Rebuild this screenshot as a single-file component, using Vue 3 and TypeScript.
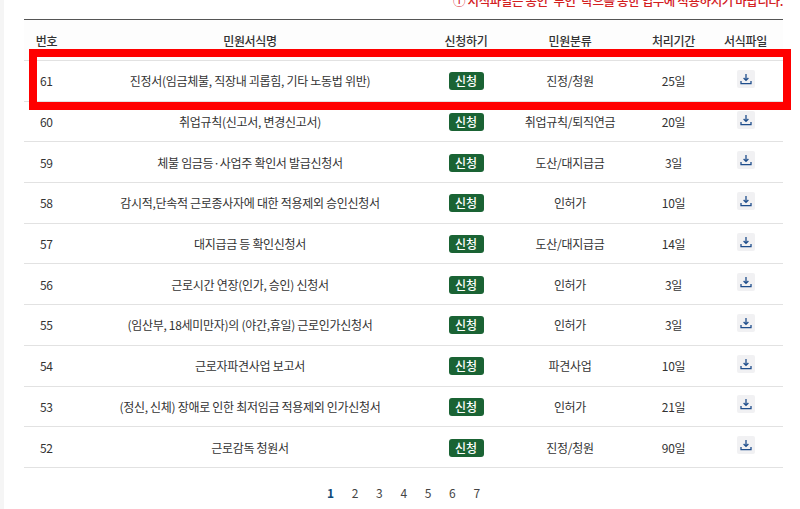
<script setup lang="ts">
interface Row { no: number; name: string; kind: string; days: string }
const rows: Row[] = [
  { no: 61, name: '진정서(임금체불, 직장내 괴롭힘, 기타 노동법 위반)', kind: '진정/청원', days: '25일' },
  { no: 60, name: '취업규칙(신고서, 변경신고서)', kind: '취업규칙/퇴직연금', days: '20일' },
  { no: 59, name: '체불 임금등·사업주 확인서 발급신청서', kind: '도산/대지급금', days: '3일' },
  { no: 58, name: '감시적,단속적 근로종사자에 대한 적용제외 승인신청서', kind: '인허가', days: '10일' },
  { no: 57, name: '대지급금 등 확인신청서', kind: '도산/대지급금', days: '14일' },
  { no: 56, name: '근로시간 연장(인가, 승인) 신청서', kind: '인허가', days: '3일' },
  { no: 55, name: '(임산부, 18세미만자)의 (야간,휴일) 근로인가신청서', kind: '인허가', days: '3일' },
  { no: 54, name: '근로자파견사업 보고서', kind: '파견사업', days: '10일' },
  { no: 53, name: '(정신, 신체) 장애로 인한 최저임금 적용제외 인가신청서', kind: '인허가', days: '21일' },
  { no: 52, name: '근로감독 청원서', kind: '진정/청원', days: '90일' },
]
const pages = [1, 2, 3, 4, 5, 6, 7]
</script>

<template>
  <div class="page">
    <p class="notice">ⓘ 서식파일은 공인 '부인' 탁으를 통한 업무에 적용하시기 바랍니다.</p>
    <table class="table">
      <colgroup>
        <col class="c1" /><col class="c2" /><col class="c3" /><col class="c4" /><col class="c5" /><col class="c6" />
      </colgroup>
      <thead>
        <tr>
          <th>번호</th><th>민원서식명</th><th>신청하기</th><th>민원분류</th><th>처리기간</th><th>서식파일</th>
        </tr>
      </thead>
      <tbody>
        <tr v-for="r in rows" :key="r.no">
          <td class="no">{{ r.no }}</td>
          <td>{{ r.name }}</td>
          <td><span class="apply">신청</span></td>
          <td>{{ r.kind }}</td>
          <td>{{ r.days }}</td>
          <td>
            <span class="file">
              <svg width="12" height="12" viewBox="0 0 12 12" fill="none" stroke="#1f4e8c" stroke-width="1.3">
                <path d="M6 1v6.2M3.6 5 6 7.4 8.4 5" />
                <path d="M1 8v2.6h10V8" />
              </svg>
            </span>
          </td>
        </tr>
      </tbody>
    </table>
    <nav class="pager">
      <span v-for="p in pages" :key="p" :class="{ on: p === 1 }">{{ p }}</span>
    </nav>
    <div class="mark"></div>
  </div>
</template>

<style>
html, body { margin: 0; background: #fff; }
</style>

<style scoped>
.page {
  position: relative;
  width: 800px;
  height: 509px;
  overflow: hidden;
  box-sizing: border-box;
  padding: 0 17px 0 24px;
  background: #fff;
  font-family: "Noto Sans CJK KR", "Noto Sans", sans-serif;
  color: #333;
  letter-spacing: -0.3px;
}
.page::before {
  content: "";
  position: absolute;
  left: 0; top: 0; bottom: 0;
  width: 4px;
  background: #f5f5f5;
}
.notice {
  margin: -9px 0 0;
  height: 28px;
  line-height: 20px;
  font-size: 12.5px;
  font-weight: 500;
  letter-spacing: -0.4px;
  color: #d3201f;
  text-align: right;
  white-space: nowrap;
}
.table {
  width: 759px;
  table-layout: fixed;
  border-collapse: collapse;
  border-top: 1px solid #555;
  font-size: 12px;
}
.c1 { width: 45px; } .c2 { width: 362px; } .c3 { width: 70px; } .c4 { width: 138px; } .c5 { width: 69px; } .c6 { width: 75px; }
th {
  height: 40px;
  padding: 0;
  font-weight: 500;
  color: #333;
  background: #fdfdfd;
  text-align: center;
  border-bottom: 1px solid #e2e2e2;
}
td {
  height: 39.7px;
  padding: 0;
  text-align: center;
  border-bottom: 1px solid #e2e2e2;
}
td.no { text-align: left; padding-left: 16px; }
.apply {
  display: inline-block;
  width: 35px;
  height: 18px;
  margin-top: 1px;
  line-height: 18px;
  border-radius: 3px;
  background: #1a6334;
  color: #fff;
  font-weight: 500;
  letter-spacing: 0;
}
.file {
  display: inline-flex;
  align-items: center;
  justify-content: center;
  width: 18px;
  height: 18px;
  margin-bottom: 4px;
  border-radius: 2px;
  background: #f1f1f3;
  vertical-align: middle;
}
.pager {
  display: flex;
  justify-content: center;
  gap: 17.7px;
  margin-top: 16px;
  font-size: 12px;
  color: #444;
  letter-spacing: 0;
}
.pager .on { color: #0f4a78; font-weight: 700; }
.mark {
  position: absolute;
  left: 29px;
  top: 49px;
  width: 762px;
  height: 61px;
  box-sizing: border-box;
  border: 8px solid #f00;
  pointer-events: none;
}
</style>
